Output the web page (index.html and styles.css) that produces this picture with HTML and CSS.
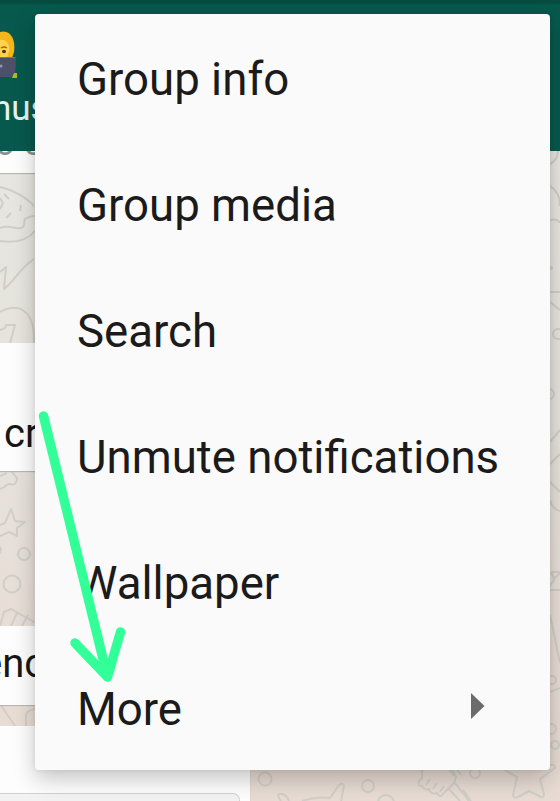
FILE: index.html
```
<!DOCTYPE html>
<html lang="en">
<head>
<meta charset="utf-8">
<title>Group chat</title>
<link rel="stylesheet" href="styles.css">
</head>
<body>
<div class="screen">
  <header class="appbar">
    <svg class="avatar" width="20" height="52" viewBox="0 0 20 52">
      <path d="M0 3C10 0 16 10 14 23L12 29H0z" fill="#f4b51d"/>
      <path d="M0 11C6 10 10 15 9 22L7 29H0z" fill="#ffd34e"/>
      <path d="M1 19q3-2 6 0" fill="none" stroke="#a8651a" stroke-width="1.3"/>
      <ellipse cx="4" cy="22.500" rx="2" ry="1.800" fill="#4b321d"/>
      <path d="M0 28h14q2 0 2 2l-1 18H0z" fill="#4c5068"/>
      <path d="M0 28h14q1 0 2 1H0z" fill="#73758c"/>
      <circle cx="1" cy="37" r="1.500" fill="#9296a8"/>
      <path d="M14 44l3 0v5h-5z" fill="#b5b52f"/>
    </svg>
    <div class="members">nus</div>
  </header>
  <main class="chat">
    <svg class="doodles" width="560" height="650" viewBox="0 151 560 650">
      <path d="M0 187C14 190 27 198 34 206M0 198l3 5-3 6M4 194l5 5M21 205l-1 6M6 218l5-5M0 228c10-4 18 3 23-1 3-3-1-8 4-9 3-1 4-2 8-2M0 241c14 2 27 0 35-10M0 272l6-5-2 22c10-7 15-20 30-30M0 312c18-10 32-2 34 22v9M0 330l5-2 1-3h9l-5 18"/>
      <path d="M0 489c8-2 5-6 10-5 4 2 7-1 7-6l-6-7M0 476l7-3M0 525l5-2 6-14 4 12 10 1-8 6 0 8-8-4-9 4M0 626l4-14 7-3 23 13M11 626l6-13M22 626l6-11M0 704l15 22M26 726v-10q0-6 9-7"/>
      <circle cx="24" cy="554" r="6"/><circle cx="12" cy="584" r="8.500"/><circle cx="-2" cy="550" r="3"/>
      <path d="M550 164q8-4 8-13M550 186q10 6 10 20M550 220q8-2 10 3M550 292h10M550 302l10 8M550 442l10-12M550 464l10-10M550 482l10 10M550 500q2 9 10 11M550 573l5 5 5-5M550 586l4-6-2-8h8M550 590h10M550 615l10 48M550 692l10-4"/>
      <circle cx="558" cy="334" r="5"/><circle cx="549" cy="394" r="5"/><circle cx="551" cy="268" r="1"/><circle cx="552" cy="680" r="4"/><circle cx="551" cy="729" r="5"/><circle cx="555" cy="745" r="4"/>
      <circle cx="265" cy="779" r="6.500"/><circle cx="368" cy="786" r="6"/><circle cx="386" cy="803" r="8"/><circle cx="475" cy="773" r="5"/>
      <path d="M281 801q-6-8 1-7 5 1 7 7M302 801q14-5 28-3l9-13q4-3 5 1l-3 15M422 768v10l-2 2q-4 6 2 6 3 5 7 3 2 6 8 4 3 5 5 2l12-12 2-6-7-14M448 788l12 13M455 783l14 18M426 785l4-6M433 789l4-6M440 792l4-6M448 768l6 8M456 768l5 7"/>
      <path d="M503 769l14 8-4 18q1 4 5 2l11-6 12 6q3 1 3-3l-4-15 15-11q1-3-3-3h-9M463 790l8 11"/>
    </svg>
    <section class="bubble first"><div class="tail">o c</div></section>
    <section class="bubble second">cr</section>
    <section class="bubble third">enc</section>
    <section class="bubble fourth"><div class="quote"></div></section>
  </main>
  <nav class="menu">
    <a class="item">Group info</a>
    <a class="item">Group media</a>
    <a class="item">Search</a>
    <a class="item">Unmute notifications</a>
    <a class="item">Wallpaper</a>
    <a class="item">More
      <svg class="caret" width="14" height="26" viewBox="0 0 14 26"><path d="M0 0l13.500 13L0 26z" fill="#6b6b6b"/></svg>
    </a>
  </nav>
  <svg class="arrow" width="560" height="801" viewBox="0 0 560 801">
    <path d="M43.500 416L107.500 677M75 643L107.500 677L120.500 632" fill="none" stroke="#33ff99" stroke-width="9.500" stroke-linecap="round" stroke-linejoin="round"/>
  </svg>
</div>
</body>
</html>
```
FILE: styles.css
```
body {
  margin: 0;
  font-family: Roboto, "Liberation Sans", sans-serif;
}
.screen {
  position: relative;
  width: 560px;
  height: 801px;
  overflow: hidden;
}
.appbar {
  box-sizing: border-box;
  height: 151px;
  padding-top: 29px;
  background: linear-gradient(#064b40 0, #064b40 3px, #07594d 5px, #07594d 100%);
  color: #e4f3f0;
}
.avatar {
  display: block;
}
.members {
  margin: 7px 0 0 -8px;
  font-size: 35px;
  line-height: 42px;
}
.chat {
  position: relative;
  display: flex;
  flex-direction: column;
  height: 650px;
  background: linear-gradient(#e7e6e0, #e6e2dc 45%, #e8dcd5 80%, #e7dbd3);
}
.doodles {
  position: absolute;
  inset: 0;
  fill: none;
  stroke: #d0cec7;
  stroke-width: 2;
  stroke-linejoin: round;
}
.bubble {
  position: relative;
  flex: none;
  box-sizing: border-box;
  width: 250px;
  background: #fdfdfd;
  color: #171717;
  font-size: 40px;
  white-space: nowrap;
  box-shadow: 0 1px 1px #b9b7b3;
}
.first {
  height: 22px;
  overflow: hidden;
}
.tail {
  margin: -34px 0 0 -5px;
  color: #88918f;
  font-size: 35px;
  line-height: 54px;
}
.second {
  height: 128px;
  margin-top: 170px;
  padding: 67px 0 0 4px;
  line-height: 48px;
}
.third {
  height: 79px;
  margin-top: 155px;
  line-height: 48px;
  padding-top: 14px;
  text-indent: -19px;
}
.fourth {
  height: 75px;
  margin-top: 21px;
  padding-top: 67px;
}
.quote {
  box-sizing: border-box;
  width: 240px;
  height: 20px;
  border: 1px solid #d2d2d2;
  border-left: 0;
  border-radius: 0 7px 0 0;
  background: #f2f2f2;
}
.menu {
  position: absolute;
  left: 35px;
  top: 14px;
  box-sizing: border-box;
  width: 515px;
  height: 756px;
  border-radius: 4px;
  background: #fafafa;
  box-shadow: 0 9px 22px rgba(0, 0, 0, .22), 0 0 5px rgba(0, 0, 0, .08);
}
.item {
  box-sizing: border-box;
  display: flex;
  align-items: center;
  justify-content: space-between;
  height: 126px;
  padding: 4px 65px 0 42px;
  color: #1b1b1b;
  font-size: 45.6px;
  white-space: nowrap;
}
.caret {
  display: block;
  margin-top: -6px;
}
.arrow {
  position: absolute;
  inset: 0;
  pointer-events: none;
}
```
